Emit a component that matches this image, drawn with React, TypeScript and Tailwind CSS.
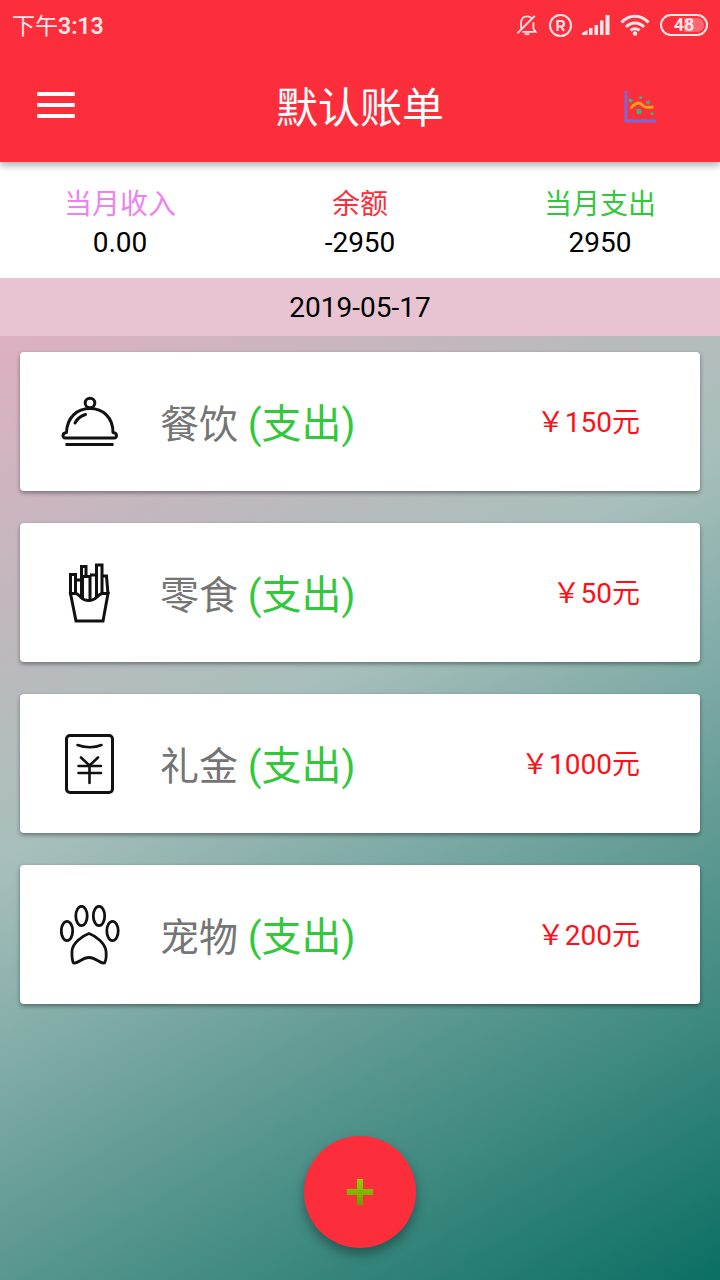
import type { ReactNode } from "react";

type Bill = {
  name: string;
  amount: number;
  icon: ReactNode;
};

const strokeProps = {
  fill: "none",
  stroke: "#111",
  strokeWidth: 3,
  strokeLinecap: "round" as const,
  strokeLinejoin: "round" as const,
};

function DishIcon() {
  return (
    <svg viewBox="0 0 60 60" className="size-15" {...strokeProps} aria-hidden="true">
      <circle cx="30" cy="11" r="4.8" />
      <path d="M6.500 40.500C7 25.500 17 16.500 30 16.500S53 25.500 53 40.500C57.500 41 57.500 46 54 46H5.500C2 46 2 41 6.500 40.500Z" />
      <path d="M15 31C17 27 21 24 25.500 22.500" />
      <path d="M5.500 52.500H53.500" strokeLinecap="butt" />
    </svg>
  );
}

function FriesIcon() {
  return (
    <svg viewBox="0 0 60 60" className="size-15" {...strokeProps} strokeLinecap="butt" strokeLinejoin="miter" aria-hidden="true">
      <path d="M10.500 30.500L16 58H43L48 30.500H42.500C40 30.500 38.500 32.500 36.500 34.500C32 38.500 25 38.500 21 34.500C19 32.500 18 30.500 15.500 30.500H10.500Z" />
      <path d="M10.500 32V11.500H15.500V31" />
      <path d="M15.500 17H21.500M21.500 34V3.500H26V15" />
      <path d="M22.500 35V13.500H30V37" />
      <path d="M30 12H36.500" />
      <path d="M36.500 34V2H42V30" />
      <path d="M41 13H46.500L48 31" />
    </svg>
  );
}

function GiftMoneyIcon() {
  return (
    <svg viewBox="0 0 60 60" className="size-15" {...strokeProps} aria-hidden="true">
      <rect x="6.500" y="1.500" width="46" height="57" rx="3.500" />
      <path d="M17.500 11C25 14 35 14 41.500 11" strokeWidth={2.6} />
      <path d="M21 23.500L29.500 31.500L38 23.500" strokeWidth={2.6} />
      <path d="M18.500 32H41M18.500 39H41M29.500 32V49" strokeWidth={2.6} />
    </svg>
  );
}

function PawIcon() {
  return (
    <svg viewBox="0 0 60 60" className="size-15" {...strokeProps} strokeWidth={2.8} aria-hidden="true">
      <ellipse cx="7" cy="26" rx="5.700" ry="9.700" />
      <ellipse cx="21.500" cy="11" rx="5.700" ry="9.700" />
      <ellipse cx="39" cy="11" rx="5.700" ry="9.700" />
      <ellipse cx="52.500" cy="26" rx="5.700" ry="9.700" />
      <path d="M29 28.500C22 31 12.500 38 12 46C11.800 52 12 55.500 13.500 58C18 59 22 52.500 29 52.500S40 59 44.500 58C46 55.500 46.500 51 46 46C45 38 36 31 29 28.500Z" />
    </svg>
  );
}

const bills: Bill[] = [
  { name: "餐饮", amount: 150, icon: <DishIcon /> },
  { name: "零食", amount: 50, icon: <FriesIcon /> },
  { name: "礼金", amount: 1000, icon: <GiftMoneyIcon /> },
  { name: "宠物", amount: 200, icon: <PawIcon /> },
];

const summary = [
  { label: "当月收入", value: "0.00", color: "text-[#ee82ee]" },
  { label: "余额", value: "-2950", color: "text-[#fd2e3b]" },
  { label: "当月支出", value: "2950", color: "text-[#32c83c]" },
];

function StatusBar() {
  return (
    <div className="flex h-12 items-center justify-between px-3 pt-0.5 text-[#ffe6e8]">
      <span className="pt-1 text-[23px] font-semibold leading-8">
        <span className="font-normal">下午</span>3:13
      </span>
      <div className="flex items-center gap-2.5">
        <svg viewBox="0 0 24 24" className="h-6 w-5.5" fill="none" stroke="currentColor" strokeWidth="2" aria-hidden="true">
          <path d="M5.500 15.500V10C5.500 5.500 8 2.500 12 2.500C14 2.500 15.500 3 16.800 4.200M19 9V16L21.500 19.500H7M1.500 21L20.500 2" />
          <path d="M9.500 22H14.500" strokeWidth="2" />
        </svg>
        <svg viewBox="0 0 24 24" className="size-6" fill="none" stroke="currentColor" strokeWidth="2" aria-hidden="true">
          <circle cx="12.500" cy="12.500" r="10.500" />
          <path d="M9.500 18V8H13C17 8 17 13.500 13 13.500H9.500M13 13.500L16 18" strokeWidth="2.200" />
        </svg>
        <svg viewBox="0 0 28 22" className="h-5.5 w-7" fill="currentColor" aria-hidden="true">
          <path d="M0 21V19L5.500 16V21ZM7 14H10.500V21H7ZM12.500 11H16V21H12.500ZM18 6.500H21.500V21H18ZM23.500 1H27.500V21H23.500Z" />
        </svg>
        <svg viewBox="0 0 30 22" className="h-5.5 w-7.5" fill="none" stroke="currentColor" strokeWidth="3" aria-hidden="true">
          <path d="M1.500 8.500C9 0 21 0 28.500 8.500M6 13C11 7.500 19 7.500 24 13M10.500 16.500C13 14 17 14 19.500 16.500" />
          <circle cx="15" cy="19.500" r="2.200" fill="currentColor" stroke="none" />
        </svg>
        <span className="h-5.5 w-12 rounded-full border-2 border-current p-0.5">
          <span className="flex h-full items-center justify-center rounded-full bg-linear-to-r from-transparent from-50% to-[#ff6670] to-50% text-[18px] font-bold leading-4">
            48
          </span>
        </span>
      </div>
    </div>
  );
}

function Header() {
  return (
    <header className="relative bg-[#fd2e3b] shadow-[0_3px_8px_rgba(0,0,0,0.35)]">
      <StatusBar />
      <div className="grid grid-cols-[120px_1fr_120px] items-center">
        <button aria-label="菜单" className="flex h-28.5 items-center pl-9">
          <svg viewBox="0 0 40 28" className="h-7 w-10" fill="#fff" aria-hidden="true">
            <path d="M1.300 1H38.700V5H1.300ZM1.300 12H38.700V16H1.300ZM1.300 23H38.700V27H1.300Z" />
          </svg>
        </button>
        <h1 className="pt-2 text-center text-[42px] leading-14 text-white">默认账单</h1>
        <button aria-label="图表" className="flex h-28.5 items-center pl-6 pt-1">
          <svg viewBox="0 0 32 32" className="size-8" fill="none" aria-hidden="true">
            <path d="M2 0V30H32" stroke="#8066d4" strokeWidth="3" />
            <path d="M6.500 17.500C9 15 11 12 14.500 12C18.500 12 19 17 24 16.500L29.500 16.200" stroke="#fca311" strokeWidth="2.800" />
            <g fill="#3fb37f">
              <circle cx="6.700" cy="9.500" r="2" />
              <circle cx="16.700" cy="6.500" r="1.500" />
              <circle cx="24" cy="11.500" r="2" />
              <circle cx="15" cy="20.500" r="2.700" />
              <circle cx="28" cy="22.500" r="1.500" />
            </g>
          </svg>
        </button>
      </div>
    </header>
  );
}

function BillCard({ bill }: { bill: Bill }) {
  return (
    <li className="flex h-[139px] items-center rounded bg-white pl-10 pr-15 shadow-[0_2px_4px_rgba(0,0,0,0.4)]">
      {bill.icon}
      <p className="flex-1 pl-10 pt-1.5 text-[39px] leading-14 text-[#757575]">
        {bill.name} <span className="text-[40px] text-[#32c83c]">(支出)</span>
      </p>
      <p className="pt-0.5 text-[28px] leading-10 text-[#ff1018]">￥{bill.amount}元</p>
    </li>
  );
}

export default function App() {
  return (
    <div className="flex min-h-screen flex-col bg-[linear-gradient(150deg,#fda8c5_2%,#a7bfbc_51%,#0b6f63_100%)] font-[Roboto,'Noto_Sans_CJK_SC',sans-serif]">
      <Header />

      <main className="flex flex-1 flex-col">
        <dl className="grid grid-cols-3 bg-white pb-4 pt-6 text-center">
          {summary.map((item) => (
            <div key={item.label}>
              <dt className={`text-[28px] leading-9.5 ${item.color}`}>{item.label}</dt>
              <dd className="text-[28px] leading-9.5 text-black">{item.value}</dd>
            </div>
          ))}
        </dl>

        <h2 className="bg-[#e8c4d2] pb-2 pt-2.5 text-center text-[28px] leading-10 text-black">
          2019-05-17
        </h2>

        <ul className="flex flex-col gap-8 px-5 py-4">
          {bills.map((bill) => (
            <BillCard key={bill.name} bill={bill} />
          ))}
        </ul>

        <div className="mt-auto flex justify-center pb-8">
          <button
            aria-label="添加"
            className="flex size-28 items-center justify-center rounded-full bg-[#fd2e3b] shadow-[0_6px_12px_rgba(0,0,0,0.35)]"
          >
            <svg viewBox="0 0 26 26" className="size-6.5" aria-hidden="true">
              <defs>
                <linearGradient id="plus" x1="0" y1="0" x2="0" y2="1">
                  <stop offset="0" stopColor="#8fd400" />
                  <stop offset="1" stopColor="#6f9a00" />
                </linearGradient>
              </defs>
              <path d="M10 0H16V10H26V16H16V26H10V16H0V10H10Z" fill="url(#plus)" />
            </svg>
          </button>
        </div>
      </main>
    </div>
  );
}
